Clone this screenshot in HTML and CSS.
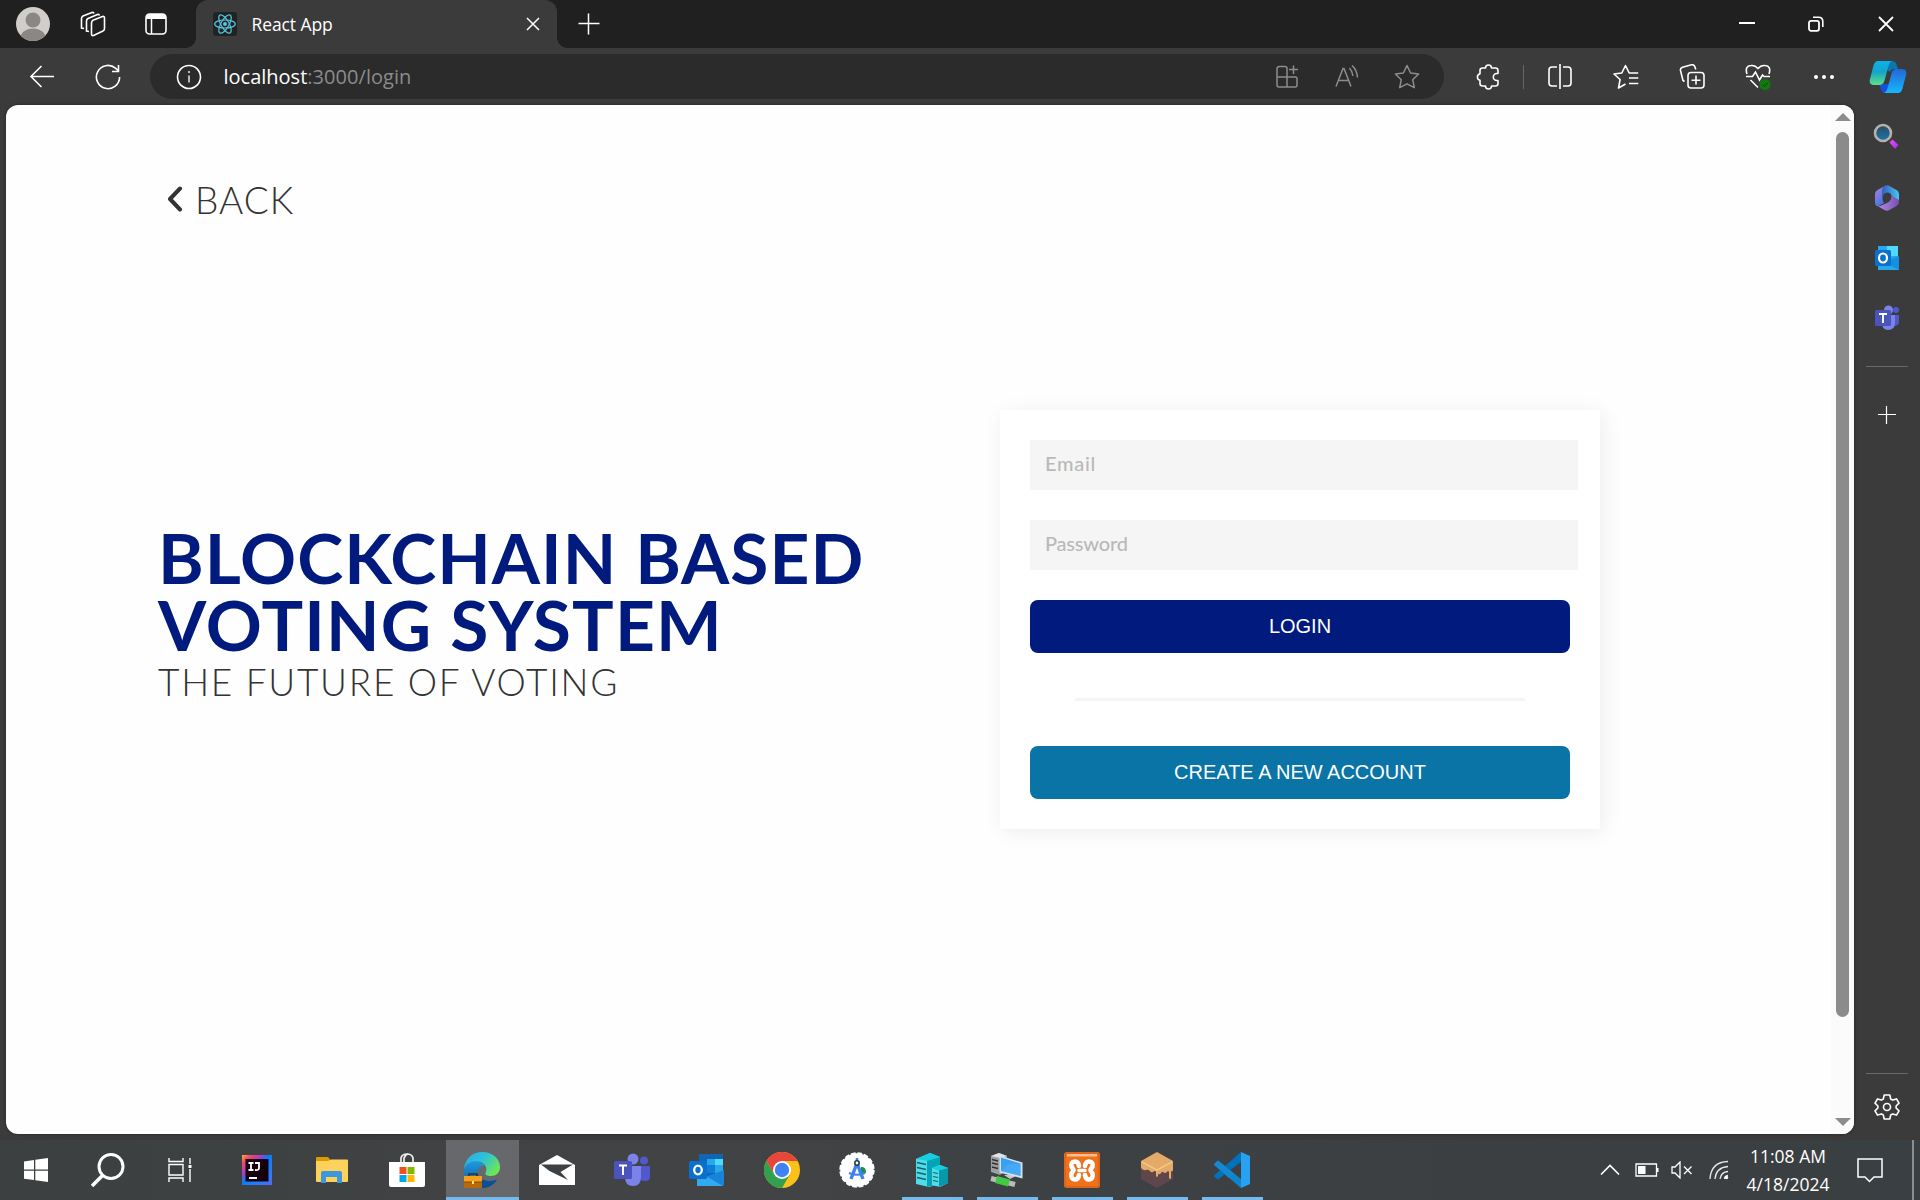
FILE: index.html
```html
<!DOCTYPE html>
<html lang="en">
<head>
<meta charset="utf-8">
<title>React App</title>
<link rel="stylesheet" href="styles.css">
</head>
<body>
<div class="desktop">
  <header class="tabbar">
    <div class="slot avatar"><svg width="34" height="34" viewBox="0 0 34 34"><defs><clipPath id="av"><circle cx="17" cy="17" r="17"/></clipPath></defs><circle cx="17" cy="17" r="17" fill="#d0cecb"/><g clip-path="url(#av)" fill="#8b8784"><circle cx="17" cy="13" r="7.5"/><ellipse cx="17" cy="32" rx="13" ry="10.5"/></g></svg></div>
    <div class="slot work"><svg class="line" width="26" height="26" viewBox="0 0 26 26"><path d="M11.500 12Q11.500 10 13 9.200L22.500 5.500Q24.500 5 24.500 7v10.500q0 1.800-1.500 2.500L13.500 24.500q-2 .5-2-1.500z"/><path d="M9 20.500 6.500 20V10Q6.500 8.300 8 7.500L17.500 3.500Q19 3 19.500 4.500"/><path d="M4 17.500 1.500 17V7.500Q1.500 6 3 5L12 1.500Q13.500 1 14 2.500"/></svg></div>
    <div class="slot acts"><svg width="24" height="24" viewBox="0 0 24 24"><rect x="2" y="2" width="20" height="20" rx="3.5" fill="none" stroke="#fff" stroke-width="1.6"/><path d="M2 7V5q0-3 3-3h14q3 0 3 3v2z" fill="#fff"/><path d="M7.5 7v15" stroke="#fff" stroke-width="1.5"/></svg></div>
    <div class="tab">
      <svg width="24" height="24" viewBox="0 0 24 24"><rect width="24" height="24" rx="3" fill="#202326"/><g fill="none" stroke="#58c4dc" stroke-width="1.2"><ellipse cx="12" cy="12" rx="10.3" ry="4"/><ellipse cx="12" cy="12" rx="10.3" ry="4" transform="rotate(60 12 12)"/><ellipse cx="12" cy="12" rx="10.3" ry="4" transform="rotate(120 12 12)"/></g><circle cx="12" cy="12" r="2" fill="#58c4dc"/></svg>
      <span class="tab-title">React App</span>
      <svg class="tab-close" width="14" height="14" viewBox="0 0 14 14"><path d="M1 1l12 12M13 1 1 13" stroke="#fff" stroke-width="1.5"/></svg>
    </div>
    <div class="slot newtab"><svg width="22" height="22" viewBox="0 0 22 22"><path d="M10.500 .5v21M.5 10.500h21" stroke="#fff" stroke-width="1.500"/></svg></div>
    <div class="window-controls">
      <svg width="16" height="16" viewBox="0 0 16 16"><path d="M0 7h16" stroke="#fff" stroke-width="2"/></svg>
      <svg width="16" height="16" viewBox="0 0 16 16"><rect x="1" y="4.8" width="10" height="10" rx="2" fill="none" stroke="#fff" stroke-width="1.8"/><path d="M5 1.2h5.5q4.3 0 4.3 4.3V11" fill="none" stroke="#fff" stroke-width="1.6"/></svg>
      <svg width="16" height="16" viewBox="0 0 16 16"><path d="M1 1l14 14M15 1 1 15" stroke="#fff" stroke-width="1.8"/></svg>
    </div>
  </header>

  <nav class="toolbar">
    <div class="slot back-btn"><svg class="line" width="26" height="24" viewBox="0 0 26 24"><path d="M25 11.500H2M12.500 1 2 11.500l10.500 10.500"/></svg></div>
    <div class="slot reload"><svg class="line" width="26" height="26" viewBox="0 0 26 26"><path d="M24.600 13A11.600 11.600 0 1 1 20.500 4.200L23 6.500M23.500 1v6.500H17"/></svg></div>
    <div class="address">
      <svg width="26" height="26" viewBox="0 0 26 26"><circle cx="13" cy="13" r="11.500" fill="none" stroke="#fff" stroke-width="1.600"/><path d="M13 11.500v7" stroke="#ddd" stroke-width="1.600"/><circle cx="13" cy="8" r="1.100" fill="#ddd"/></svg>
      <span class="url"><span class="host">localhost</span><span class="path">:3000/login</span></span>
      <div class="address-actions">
        <svg class="dim" width="24" height="24" viewBox="0 0 24 24"><path d="M12 12V3.500Q12 1.500 10 1.500H4.500Q2 1.500 2 4v16q0 2 2 2h16q2 0 2-2v-6.500q0-1.500-1.500-1.500H2M12 12v10M18.500 .5v8.500M14 4.500h9"/></svg>
        <svg class="dim" width="24" height="24" viewBox="0 0 24 24"><path d="M1 21.500 8 3.500h1l7 18M4 15.500h9.500M14.500 3q3 3.500 3.500 8M17 .5q5 4.500 5.500 12"/></svg>
        <svg class="dim" width="26" height="26" viewBox="0 0 26 26"><path stroke-linejoin="round" d="m13 1.500 3.600 7.500 8 1-5.900 5.700 1.600 8L13 19.800l-7.300 3.900 1.600-8L1.400 10l8-1z"/></svg>
      </div>
    </div>
    <div class="slot tool first"><svg class="line" width="26" height="26" viewBox="0 0 26 26"><path stroke-linejoin="round" d="M10.500 4a3 3 0 0 1 6 0H20.500q2.500 0 2.500 2.500V9.500h-1.200a3.500 3.500 0 0 0 0 7H23V19.500q0 2.500-2.500 2.500h-4a3 3 0 0 1-6 0H7.500Q5 22 5 19.500V16.300a3.400 3.400 0 0 1 0-6.600V6.500Q5 4 7.500 4z"/></svg></div>
    <i class="tool-sep"></i>
    <div class="slot tool"><svg class="line" width="26" height="26" viewBox="0 0 26 26"><path d="M10 3H5Q2 3 2 6v13q0 3 3 3h5M16 3h5q3 0 3 3v13q0 3-3 3h-5M13 0v25"/></svg></div>
    <div class="slot tool"><svg class="line" width="26" height="26" viewBox="0 0 26 26"><path stroke-linejoin="round" d="M12.500 20 5.500 24l1.600-8.500L1 10l7.800-1L12.500 1.500 16.200 9h9M16 14h9.300M16 19.500h9.300"/></svg></div>
    <div class="slot tool"><svg class="line" width="26" height="26" viewBox="0 0 26 26"><rect x="9" y="8.500" width="16" height="15.500" rx="3"/><path d="M17 11.500v9M12.500 16.200h9M5.500 17.500 4 16.500 1.500 6.500Q1 4 3.500 3.200L12.500.8Q15.200.3 16 3l.7 2.500"/></svg></div>
    <div class="slot tool"><svg class="line" width="26" height="26" viewBox="0 0 26 26"><path d="M2 10Q-.5 2 6 1.500q4-.5 7 3 3-3.500 7-3 6.500 .5 4 8.500M1 12.500h6.500L10.500 8l4 8 3-5 1.500 1.500h6M5.500 16l7.500 7.500"/><circle cx="20" cy="20.500" r="5.500" fill="#0f7b0f" stroke="none"/><path d="m17.500 20.500 2 2 3.500-4" stroke="#173b17" stroke-width="1"/></svg></div>
    <div class="slot tool"><svg width="22" height="6" viewBox="0 0 22 6" fill="#fff"><circle cx="3" cy="3" r="2"/><circle cx="11" cy="3" r="2"/><circle cx="19" cy="3" r="2"/></svg></div>
    <div class="slot copilot"><svg width="38" height="34" viewBox="0 0 38 34"><defs><linearGradient id="cp1" x2="0" y2="1"><stop stop-color="#0fb0e8"/><stop offset=".45" stop-color="#13a5c8"/><stop offset="1" stop-color="#5fe087"/></linearGradient><linearGradient id="cp2" x2="0" y2="1"><stop stop-color="#2465d8"/><stop offset="1" stop-color="#16b9fa"/></linearGradient></defs><path d="M18 1h5q3.500 0 4.500 3.500L29 9h-4q-3 0-4 3l-3-2z" fill="#0777b2"/><path d="M10 24h10l-2 9h-1q-4 0-5-3.500z" fill="#1650d8"/><path d="M9 1h14q-2.500 1-3.500 5l-4 14.500Q14.300 25 10 25H5q-5.500 0-4-6L4.500 5.500Q5.800 1 9 1z" fill="url(#cp1)"/><path d="M27 9h6q5.500 0 4 6l-3.500 13.500Q32.200 33 29 33H15q2.500-1 3.500-5l4-14.500Q23.700 9 27 9z" fill="url(#cp2)"/></svg></div>
  </nav>

  <div class="middle">
    <main class="page">
      <div class="document">
        <a class="back"><svg width="16" height="27" viewBox="0 0 16 27"><path d="M13 2.500 3 13 13 23.500" fill="none" stroke="#333" stroke-width="4" stroke-linecap="round" stroke-linejoin="round"/></svg><span>BACK</span></a>
        <div class="columns">
          <section class="hero">
            <h1><span class="title-a">BLOCKCHAIN BASED</span><span class="title-b">VOTING SYSTEM</span></h1>
            <p>THE FUTURE OF VOTING</p>
          </section>
          <form class="card">
            <input class="email" type="text" placeholder="Email">
            <input class="password" type="password" placeholder="Password">
            <button class="login" type="button">LOGIN</button>
            <hr>
            <button class="create" type="button">CREATE A NEW ACCOUNT</button>
          </form>
        </div>
      </div>
      <div class="scrollbar">
        <svg width="16" height="8" viewBox="0 0 16 8"><path d="M8 0l8 8H0z" fill="#8b8b8b"/></svg>
        <div class="thumb"></div>
        <svg width="16" height="8" viewBox="0 0 16 8"><path d="M0 0h16L8 8z" fill="#8b8b8b"/></svg>
      </div>
    </main>
    <aside class="sidebar">
      <svg class="side-search" width="26" height="26" viewBox="0 0 26 26"><defs><linearGradient id="lens" x2="0" y2="1"><stop stop-color="#31495c"/><stop offset="1" stop-color="#157aad"/></linearGradient><linearGradient id="grip" x2="1" y2="1"><stop stop-color="#f04ff0"/><stop offset="1" stop-color="#a02cff"/></linearGradient></defs><circle cx="10" cy="10" r="8" fill="url(#lens)" stroke="#b5b2ad" stroke-width="2.600"/><path d="m16.500 19.500 3-3 6 5.500-3.500 3.800z" fill="url(#grip)"/></svg>
      <svg class="side-m365" width="26" height="28" viewBox="0 0 26 28"><defs><linearGradient id="m1" x2=".6" y2="1"><stop stop-color="#b184e0"/><stop offset="1" stop-color="#3f74df"/></linearGradient><linearGradient id="m2" x2="1"><stop stop-color="#3361c9"/><stop offset="1" stop-color="#49c4f2"/></linearGradient><linearGradient id="m3" x2="1"><stop stop-color="#b98ae6"/><stop offset="1" stop-color="#7550b0"/></linearGradient></defs><path d="M12 1.200 3.500 6Q1 7.300 1 10v8q0 4.500 3.500 4.200L10 19q-1.500-1.500-1.500-4V6.500q0-4 3.500-5.300z" fill="url(#m1)"/><path d="M10.500 2q2.500-1.400 5 0L22.500 6Q25 7.300 25 10v6.500L17.500 12q0-3-3.500-3.500-4 0-5.500 4V6.500Q8.500 3.500 10.500 2z" fill="url(#m2)"/><path d="M17.500 12 25 16v2q0 2.500-2.500 4l-7 4q-2.500 1.400-5 0l-7-4q2 .8 4-.5L14 18.500q3.500-2 3.500-6.500z" fill="url(#m3)"/></svg>
      <svg width="26" height="26" viewBox="0 0 26 26"><path d="M4 1h20v23H4z" fill="#28a8ea"/><path d="M13 1h11v10H13z" fill="#50d9ff"/><path d="m4 19 21-8v14H6z" fill="#1490df"/><path d="m4 20 8-2 13 7H4z" fill="#28a8ea"/><rect x="1" y="5" width="16" height="16" rx="1.500" fill="#0a70cd"/><ellipse cx="9" cy="13" rx="4" ry="4.500" fill="none" stroke="#fff" stroke-width="2.200"/></svg>
      <svg width="26" height="26" viewBox="0 0 26 26"><circle cx="14.500" cy="5" r="4.500" fill="#7b83eb"/><circle cx="22" cy="5" r="3" fill="#5059c9"/><path d="M17 10h8v7q0 4-6 4z" fill="#5059c9"/><path d="M8 10h13v8q0 7-7 7-6 0-6-7z" fill="#7b83eb"/><rect x="1" y="5" width="16" height="16" rx="1.500" fill="#4b53bc"/><path d="M5 9h8M9 9v9" stroke="#fff" stroke-width="1.900"/></svg>
      <i class="side-sep"></i>
      <svg class="side-plus" width="18" height="18" viewBox="0 0 18 18"><path d="M8.500 0v18M0 8.500h18" stroke="#fff" stroke-width="1.200"/></svg>
      <i class="side-sep lower"></i>
      <svg class="line gear" width="26" height="26" viewBox="0 0 26 26"><path stroke-linejoin="round" d="M10.200 1h5.600l.9 4 1.900 1.100 3.900-1.200 2.500 4.300-2.900 2.800v2l2.900 2.800-2.500 4.300-3.900-1.200-1.900 1.100-.9 4h-5.600l-.9-4-1.900-1.100-3.900 1.200L1 16.800 3.900 14v-2L1 9.200l2.500-4.300 3.900 1.200L9.300 5z"/><circle cx="13" cy="13" r="3.500"/></svg>
    </aside>
  </div>

  <footer class="taskbar">
    <div class="slot sys"><svg width="24" height="24" viewBox="0 0 24 24"><path d="M0 3.500 10 2v9.500H0zM11.300 1.800 24 0v11.500H11.300zM0 12.700h10V22L0 20.700zM11.300 12.700H24V24l-12.700-1.800z" fill="#fff"/></svg></div>
    <div class="slot sys"><svg width="34" height="34" viewBox="0 0 34 34"><circle cx="20" cy="13.500" r="12" fill="none" stroke="#fff" stroke-width="3"/><path d="M11.500 22.500 1 33" stroke="#fff" stroke-width="3.500"/></svg></div>
    <div class="slot sys"><svg width="24" height="24" viewBox="0 0 24 24"><path d="M1 0v3.500h14V0M1 24v-4h14v4M1 6.500h14v10.500H1zM22 0v6M22 11v13M22 7v3" fill="none" stroke="#fff" stroke-width="1.400"/><path d="M20.500 7h3v3h-3z" fill="#fff"/></svg></div>
    <div class="slot app lead"><svg width="30" height="30" viewBox="0 0 30 30"><defs><linearGradient id="ij" x2="1" y2="1"><stop stop-color="#fcae3d"/><stop offset=".15" stop-color="#f3486b"/><stop offset=".35" stop-color="#a03cc8"/><stop offset=".45" stop-color="#087cfa"/><stop offset=".8" stop-color="#2a7cfa"/><stop offset="1" stop-color="#5c65f3"/></linearGradient></defs><rect width="30" height="30" fill="url(#ij)"/><rect x="3.500" y="4" width="23" height="22.500" fill="#16000e"/><path d="M6.500 8h5M9 8v7M6.500 15h5M13 8h4v5q0 2.500-4 2M7 23h8" stroke="#fff" stroke-width="1.800" fill="none"/></svg></div>
    <div class="slot app"><svg width="34" height="28" viewBox="0 0 34 28"><path d="M1 5V2q0-1 1-1h10q1 0 2 1l2 3z" fill="#dd9b00"/><path d="M1 5h12l3-1.500h16q1 0 1 1V25q0 1-1 1H2q-1 0-1-1z" fill="#fdd25c"/><path d="M6 27V17q0-2 2-2h17q2 0 2 2v10h-5v-6H11v6z" fill="#3c97dc"/></svg></div>
    <div class="slot app"><svg width="36" height="36" viewBox="0 0 36 36"><path d="M12 10V6q1-4 6-4t6 4v4M15 10V6q2-4 4-4" fill="none" stroke="#eee" stroke-width="1.700"/><path d="M0 10h36v23q0 2-2 2H2q-2 0-2-2z" fill="#fff"/><path d="M10.500 15h7v7h-7z" fill="#f25022"/><path d="M18.500 15h7v7h-7z" fill="#7fba00"/><path d="M10.500 23h7v7h-7z" fill="#00a4ef"/><path d="M18.500 23h7v7h-7z" fill="#ffb900"/></svg></div>
    <div class="slot app active"><svg width="36" height="36" viewBox="0 0 36 36"><defs><linearGradient id="ed" x2="1" y2=".6"><stop stop-color="#2aa7e8"/><stop offset=".5" stop-color="#2cc2d8"/><stop offset="1" stop-color="#6be65a"/></linearGradient><linearGradient id="ed2" x2="0" y2="1"><stop stop-color="#1f9ae0"/><stop offset="1" stop-color="#0a55a8"/></linearGradient></defs><path d="M0 18Q2 9 11 9q7 0 10 5-5-1-7 4-1 5 3 9 6 4 16 1-6 8-15 8Q0 34 0 18z" fill="url(#ed2)"/><path d="M0 17C1 7 8 0 18 0c11 0 18 7 18 15 0 6-4 9-9 9-4 0-6-1-5.500-3 2-4 .5-9-4.500-11C9 7.500 2 11 0 17z" fill="url(#ed)"/><path d="M17 27q7 4 16 .5Q28 36 18 36v-9z" fill="#0c4f94"/><rect y="24" width="18" height="12" rx="1" fill="#b8690c"/><path d="M0 24h18v6H0z" fill="#f5a01e"/><path d="M5 24v-2h8v2" fill="none" stroke="#4b2c05" stroke-width="1.600"/><path d="M0 30h18" stroke="#8a4a06"/><path d="M8 29h2v3H8z" fill="#ffe070"/></svg></div>
    <div class="slot app"><svg width="36" height="30" viewBox="0 0 36 30"><path d="M0 10 18 0l18 10v20H0z" fill="#fff"/><path d="M2 9.500h32L21.500 17 29 25 10.500 16z" fill="#3e4143"/></svg></div>
    <div class="slot app"><svg width="36" height="34" viewBox="0 0 36 34"><circle cx="19" cy="6" r="5.500" fill="#7b83eb"/><circle cx="30" cy="7.500" r="4" fill="#5059c9"/><path d="M25 13h11v11q0 4-5 4-5 0-5-3z" fill="#5059c9"/><path d="M11 13h16v11q0 9-8 9t-8-9z" fill="#7b83eb"/><rect x="0" y="8" width="18" height="18" rx="1.500" fill="#4b53bc"/><path d="M5 12.500h8M9 12.500V22" stroke="#fff" stroke-width="2"/></svg></div>
    <div class="slot app"><svg width="36" height="32" viewBox="0 0 36 32"><path d="M10 0h24v25H10z" fill="#1066b5"/><path d="M18 5h8v8h-8zM26 11h8v8h-8z" fill="#28a8ea"/><path d="M26 5h8v6h-8z" fill="#50d9ff"/><path d="M18 11h8v8h-8z" fill="#0e7dd4"/><path d="m8 26 27-10v14q0 2-2 2H8z" fill="#1784d8"/><path d="m8 17 26 15H8z" fill="#32aaf0"/><rect y="7" width="18" height="18" rx="1.500" fill="#0a6fce"/><ellipse cx="9" cy="16" rx="3.800" ry="4.300" fill="none" stroke="#fff" stroke-width="2.300"/></svg></div>
    <div class="slot app"><svg width="36" height="36" viewBox="0 0 36 36"><circle cx="18" cy="18" r="18" fill="#fbc116"/><path d="M2.400 9A18 18 0 0 1 33.600 9H18L10.200 22.500z" fill="#e8453c"/><path d="M2.400 9 10.200 22.500H25.800L18 36A18 18 0 0 1 2.400 9z" fill="#31a04f"/><circle cx="18" cy="18" r="9" fill="#fff"/><circle cx="18" cy="18" r="7.200" fill="#3f82f2"/></svg></div>
    <div class="slot app"><svg width="36" height="36" viewBox="0 0 36 36"><circle cx="18" cy="18" r="16.700" fill="#fff"/><circle cx="18" cy="18" r="16.200" fill="none" stroke="#fff" stroke-width="3" stroke-dasharray="4.500 1.860"/><path d="M22 15q5-1 5 6h-5z" fill="#18943a"/><path d="m17.300 13-5.300 14M18.700 13l5.300 14" stroke="#3f80ef" stroke-width="3.400"/><path d="M10 21q8 3.500 16 0" fill="none" stroke="#3f80ef" stroke-width="2.200"/><path d="M18 6v4" stroke="#3f80ef" stroke-width="2.600"/><circle cx="18" cy="11" r="2.200" fill="#fff" stroke="#263b42" stroke-width="1.600"/></svg></div>
    <div class="slot app running"><svg width="34" height="34" viewBox="0 0 34 34"><path d="m1 6 14-6 10 4v27l-11 3-13-3z" fill="#4fdde8"/><path d="m1 6 14-6 10 4-12 4z" fill="#13cfe2"/><path d="m12 8 13-4v27l-13 3z" fill="#05a1b7"/><path d="m2 9.500 9 2M2 14.500l9 2M2 19.500l9 2M2 24.500l9 2" stroke="#17616b" stroke-width="1.300"/><path d="m17 15 8-3 8 3v15l-8 4-8-2z" fill="#4fdde8"/><path d="m17 15 8-3 8 3-9 3z" fill="#13cfe2"/><path d="m24 17.500 9-2.500v15l-9 4z" fill="#0798ac"/><path d="m18 19.500 5 1M18 23.500l5 1M18 27.500l5 1" stroke="#17616b" stroke-width="1.200"/></svg></div>
    <div class="slot app running"><svg width="34" height="34" viewBox="0 0 34 34"><path d="m1 3 8-3 8 3v15l-7 4-9-3z" fill="#9d9fa2"/><path d="m1 3 8-3 8 3-7 2z" fill="#e4e4e6"/><path d="M2 6.500 8 8M2 10l6 1.500M2 14l6 1.500" stroke="#333" stroke-width="1.400"/><path d="m14 22 10-1 4 1-8 4z" fill="#c9c9cc"/><path d="m9.500 2.500 23 7v16l-23-6z" fill="#d4e4ee"/><path d="m11 4.500 19.500 6v12.500L11 18z" fill="#3a9ff0"/><path d="m19 11 11.500-.5v12.500L11 18z" fill="#4db0fa" opacity=".6"/><path d="m1 25.500 24 6" stroke="#b9bdb9" stroke-width="5"/><path d="m6 26.500 13 3.500" stroke="#42c943" stroke-width="7"/></svg></div>
    <div class="slot app running"><svg width="36" height="36" viewBox="0 0 36 36"><rect width="36" height="36" rx="3" fill="#ee711b"/><rect x="1" y="1" width="34" height="34" rx="2.500" fill="none" stroke="#cf5b12"/><path d="M3 2h30v2.500H3z" fill="#f9be91"/><g fill="none" stroke="#fff" stroke-width="4.600" stroke-linejoin="round" stroke-linecap="round"><path d="M15 14q-.5-4.500-4-4.500-4.500.5-3.500 5l2 3.500-2 3.500q-1 5.500 3.500 6 3.500 0 4-4.500"/><path d="M21 14q.5-4.500 4-4.500 4.500.5 3.500 5l-2 3.500 2 3.500q1 5.500-3.500 6-3.500 0-4-4.500"/><path d="M15 18.500h6" stroke-width="3.600"/></g></svg></div>
    <div class="slot app running"><svg width="34" height="36" viewBox="0 0 34 36"><path d="m17 0 16 9v18l-16 9L1 27V9z" fill="#5e464b"/><path d="m17 0 16 9v10q-1-1-2 1v6q-1 2-2 0v-6q-1-2-2 0-2 2-4 0-1-1-2 1t-3 1v2q-1 2-2 0v-4q-1-2-3 0-2 1-3-1-2-2-4-1t-5-2V9z" fill="#e4aa67"/><path d="m2 10 15 8 15-8" fill="none" stroke="#f5cd96" stroke-width="1.300"/></svg></div>
    <div class="slot app running"><svg width="36" height="36" viewBox="0 0 36 36"><path d="m1 11 3-2.500L27 27v9L0 13z" fill="#0e86ce"/><path d="m0 23.500 27-23.500v10L4 27.500l-4-3z" fill="#0072ba"/><path d="m0 12.500 4-4 16 13-5 4.500z" fill="#1488d2"/><path d="m27 0 9 4v28l-9 4z" fill="#27a2f0"/></svg></div>
    <div class="tray">
      <svg class="line" width="20" height="12" viewBox="0 0 20 12"><path d="m1 10.500 9-9 9 9"/></svg>
      <svg class="battery" width="24" height="14" viewBox="0 0 24 14"><path d="M1 1h20.500v12H1z" fill="none" stroke="#fff" stroke-width="1.300"/><path d="M22 5h1.500v4H22zM3 3h7.500v8H3z" fill="#fff"/></svg>
      <svg class="speaker" width="22" height="18" viewBox="0 0 22 18"><path d="M1 6h3l5-5v16l-5-5H1zM13 5.500l7.500 7.500M20.500 5.500 13 13" fill="none" stroke="#fff" stroke-width="1.300"/></svg>
      <svg class="wifi" width="20" height="20" viewBox="0 0 20 20"><path d="M1 19Q2 2 19 1.500M6 19Q7 7.500 19 6.500M11 19q1-7 8-7.500M15.500 19q0-3 3.500-3.500" fill="none" stroke="#e8e8e8" stroke-width="1.300"/><circle cx="17.500" cy="17.500" r="1.700" fill="#fff"/></svg>
      <div class="clock"><span class="time">11:08 AM</span><span class="date">4/18/2024</span></div>
      <svg class="notice" width="26" height="25" viewBox="0 0 26 25"><path d="M1 1h24v18h-8l-4.500 4.500L8 19H1z" fill="none" stroke="#fff" stroke-width="1.500"/></svg>
    </div>
    <i class="show-desktop"></i>
  </footer>
</div>
</body>
</html>
```
FILE: styles.css
```css
* { box-sizing: border-box; }
body { margin: 0; overflow: hidden; font-family: "Open Sans", "Noto Sans", sans-serif; }
svg { display: block; flex: none; }
.line { fill: none; stroke: #fff; stroke-width: 1.6; }
.dim { fill: none; stroke: #8d8d8d; stroke-width: 1.5; }
.slot { display: flex; align-items: center; justify-content: center; flex: none; }

.desktop { width: 1920px; height: 1200px; display: flex; flex-direction: column; background: #3b3b3b; }

/* tab strip */
.tabbar { display: flex; height: 48px; background: #202020; align-items: stretch; }
.avatar { width: 66px; }
.work { width: 54px; }
.acts { width: 72px; }
.tab { position: relative; display: flex; align-items: center; width: 361px; margin-left: 4px; padding: 0 17px; background: #3b3b3b; border-radius: 12px 12px 0 0; color: #fff; }
.tab::before, .tab::after { content: ""; position: absolute; bottom: 0; width: 10px; height: 10px; }
.tab::before { left: -10px; background: radial-gradient(circle at 0 0, #202020 9.5px, #3b3b3b 10px); }
.tab::after { right: -10px; background: radial-gradient(circle at 100% 0, #202020 9.5px, #3b3b3b 10px); }
.tab-title { margin-left: 14.5px; padding-bottom: 1px; font-size: 17.5px; letter-spacing: -0.1px; }
.tab-close { margin-left: auto; }
.newtab { width: 64px; }
.window-controls { display: flex; align-items: center; gap: 53.5px; margin-left: auto; padding-right: 26.5px; }

/* toolbar */
.toolbar { display: flex; height: 57px; align-items: center; background: #3b3b3b; }
.back-btn { width: 83px; }
.reload { width: 50px; }
.address { display: flex; align-items: center; width: 1294px; height: 45px; margin-left: 17px; padding: 0 24px 0 26px; border-radius: 23px; background: #2b2b2b; }
.url { margin-left: 21.5px; font-size: 20px; line-height: 28px; white-space: nowrap; }
.host { color: #fff; letter-spacing: 0; }
.path { color: #8b8b8b; letter-spacing: 0.05px; }
.address-actions { display: flex; align-items: center; gap: 35.5px; margin-left: auto; }
.tool { width: 66px; }
.first { margin-left: 11px; }
.tool-sep { width: 1px; height: 24px; margin: 0 3px 0 2px; background: #666; }
.copilot { width: 61px; }

/* browser body */
.middle { display: flex; height: 1035px; padding: 0 0 6px 6px; }
.page { display: flex; width: 1848px; height: 1029px; border-radius: 12px; overflow: hidden; background: #fefefe; box-shadow: 0 0 3px #222; }
.document { width: 1825px; padding: 73px 0 0 152px; font-family: Lato, sans-serif; }
.back { display: flex; align-items: center; height: 44px; gap: 12px; padding-left: 9px; color: #333; font-size: 37px; font-weight: 300; line-height: 44px; letter-spacing: 1px; }
.back svg { margin-top: -1px; }
.columns { display: flex; align-items: flex-start; padding-top: 188px; }
.hero { width: 842px; padding-top: 114px; }
.hero h1 { display: flex; flex-direction: column; margin: 0; color: #001a7e; font-size: 69.5px; line-height: 67px; font-weight: 700; white-space: nowrap; }
.title-a { letter-spacing: 1px; }
.title-b { letter-spacing: 1.15px; }
.hero p { margin: 3px 0 0; color: #333; font-size: 37px; line-height: 42px; font-weight: 300; letter-spacing: 1.72px; white-space: nowrap; }
.card { display: flex; flex-direction: column; width: 600px; height: 419px; padding: 30px; background: #fff; box-shadow: 3px 3px 20px rgba(0, 0, 0, .07); }
.card input { width: 548px; height: 50px; margin: 0 0 30px; padding: 0 15px 5px; border: 0; background: #f5f5f5; font: 500 20px Lato, sans-serif; }
.card input::placeholder { color: #b9b9b9; opacity: 1; }
.card .email { letter-spacing: 0.7px; }
.card .password { letter-spacing: -0.2px; }
.card button { width: 540px; height: 53px; padding: 0 0 1px; border: 0; border-radius: 8px; color: #fff; font: 20px "Liberation Sans", Arial, sans-serif; }
.card .login { background: #001a7e; }
.card .create { background: #0974a5; }
.card hr { width: 450px; height: 3px; margin: 45px auto; border: 0; background: #f5f5f5; flex: none; }
.scrollbar { display: flex; flex-direction: column; align-items: center; width: 23px; padding: 8px 0; background: #fbfbfb; }
.thumb { width: 13px; height: 885px; margin: 11px 0 auto; border-radius: 7px; background: #8b8b8b; }

/* side rail */
.sidebar { display: flex; flex-direction: column; align-items: center; width: 66px; padding-top: 18px; gap: 34px; }
.side-search { margin-right: 2px; }
.side-m365 { margin: 1px 0 -1px; }
.side-sep { width: 42px; height: 1px; margin-top: 1px; background: #686868; }
.side-plus { margin: 5px 1px 0 0; }
.sidebar .lower { margin-top: auto; }
.gear { margin: -14px 0 14px; }

/* taskbar */
.taskbar { display: flex; height: 60px; background: linear-gradient(90deg, #3c4041, #424345 35%, #3d4143 60%, #3c3f41 84%, #393f42); }
.sys { width: 72px; }
.app { width: 61px; margin: 0 7px; border-bottom: 3px solid transparent; padding-top: 3px; }
.lead { margin-left: 10.5px; }
.active { width: 73px; margin: 0 1px; background: #67686b; border-color: #76b9ed; }
.running { border-color: #76b9ed; }
.tray { display: flex; align-items: center; margin-left: auto; color: #fff; }
.battery { margin-left: 15px; }
.speaker { margin-left: 12px; }
.wifi { margin-left: 16px; }
.clock { display: flex; flex-direction: column; align-items: center; width: 94px; margin-left: 12px; font-size: 17.5px; line-height: 28px; white-space: nowrap; }
.notice { margin-left: 22px; }
.show-desktop { width: 2px; margin: 0 6px 0 29px; background: #8c8e90; }
```
